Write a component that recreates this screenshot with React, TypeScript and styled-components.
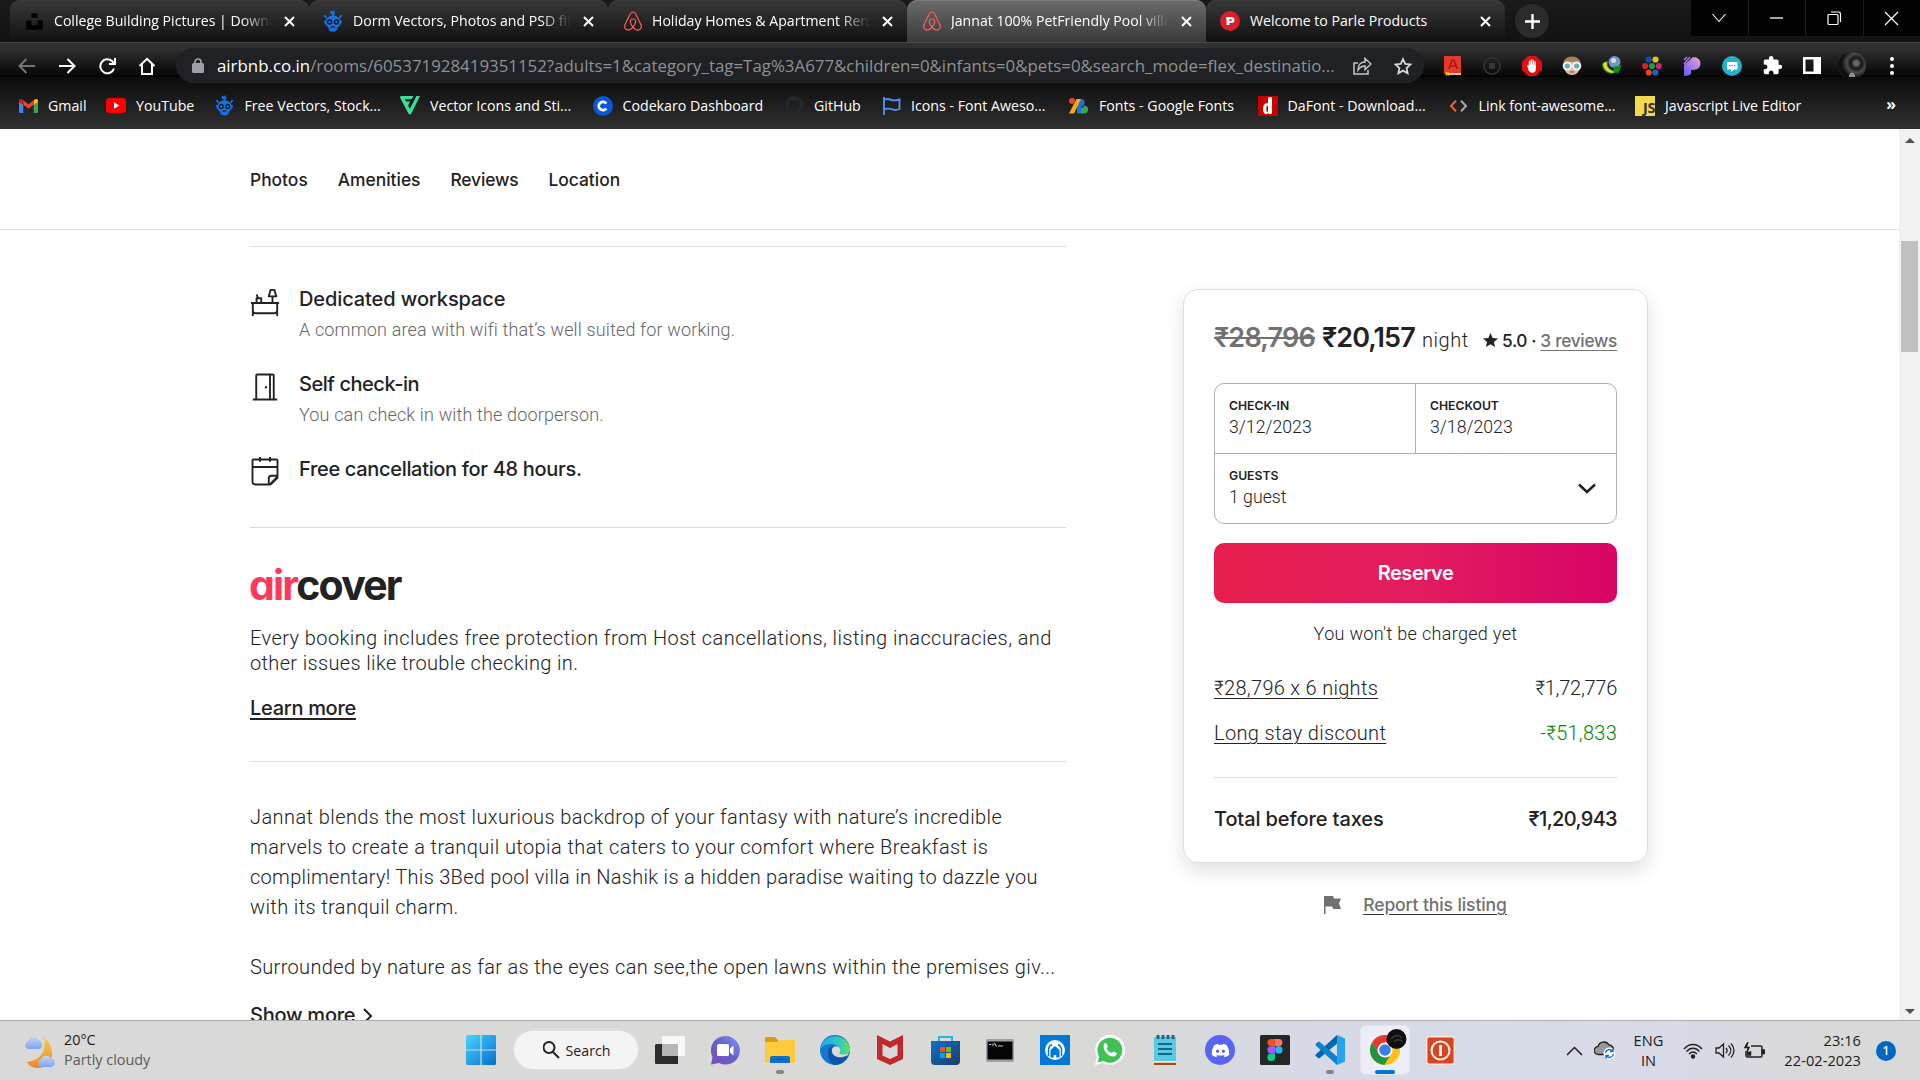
import React from 'react';
import styled, { createGlobalStyle } from 'styled-components';
import { FaAirbnb, FaDiscord, FaGithub, FaUnsplash } from 'react-icons/fa';
import { MdExtension } from 'react-icons/md';

const ui = '"Open Sans", "Noto Sans", sans-serif';
const medium = 'Inter, "Noto Sans", sans-serif';
const light = 'Roboto, "Noto Sans", sans-serif';

const GlobalStyle = createGlobalStyle`
  * { box-sizing: border-box; }
  body { margin: 0; background: #fff; overflow: hidden; }
  svg { display: block; flex: none; }
`;

const Screen = styled.div`
  width: 1920px;
  height: 1080px;
  display: flex;
  flex-direction: column;
  overflow: hidden;
  font-family: ${ui};
`;

/* ---------- browser frame ---------- */

const TabStrip = styled.div`
  height: 42px;
  flex: none;
  display: flex;
  background: linear-gradient(#1a1a1a, #121212);
  padding-left: 10px;
`;

const Tab = styled.div<{ $active?: boolean }>`
  width: 299px;
  height: 42px;
  padding: 0 14px;
  display: flex;
  align-items: center;
  gap: 10px;
  color: #fff;
  border-radius: 10px 10px ${p => (p.$active ? '0 0' : '8px 8px')};
  background: ${p => (p.$active ? 'linear-gradient(#6b6b6b, #393939)' : 'linear-gradient(#383838, #111)')};
  box-shadow: inset 0 1px 0 ${p => (p.$active ? '#7d7d7d' : '#3c3c3c')};
`;

const TabRule = styled.i<{ $hidden?: boolean }>`
  width: 1px;
  height: 26px;
  margin: 9px -1px 0 0;
  background: ${p => (p.$hidden ? 'transparent' : '#5c5c5c')};
`;

const TabTitle = styled.span<{ $fade?: boolean }>`
  flex: 1;
  overflow: hidden;
  white-space: nowrap;
  font-size: 14.1px;
  line-height: 24px;
  ${p => p.$fade && 'mask-image: linear-gradient(90deg, #000 86%, transparent 100%);'}
  margin-right: 2px;
`;

const NewTab = styled.div`
  width: 34px;
  height: 34px;
  margin: 4px 0 0 10px;
  border-radius: 50%;
  display: grid;
  place-items: center;
  background: #2b2b2b;
`;

const WindowButtons = styled.div`
  margin-left: auto;
  display: flex;
  gap: 1px;
  height: 36px;
  background: #1d1d1d;
`;

const WindowButton = styled.div`
  width: 56.5px;
  display: grid;
  place-items: center;
  background: #020202;
`;

const Toolbar = styled.div`
  height: 35px;
  flex: none;
  display: flex;
  align-items: flex-start;
  padding: 6px 0 0 7px;
  background: linear-gradient(#333 0, #303030 6px, #060606 34px, #000 34px);
  box-shadow: inset 0 1px 0 #484848;
`;

const NavSlot = styled.div`
  width: 40px;
  height: 35px;
  display: grid;
  place-items: center;
`;

const Omnibox = styled.div`
  position: relative;
  width: 1248px;
  height: 35px;
  margin-left: 9px;
  padding-left: 12px;
  border-radius: 18px;
  background: #202124;
  display: flex;
  align-items: center;
`;

const Url = styled.span`
  margin-left: 9px;
  width: 1125px;
  white-space: nowrap;
  color: #8d9195;
  font-size: 16.86px;
  line-height: 30px;
  b { font-weight: 400; color: #fff; }
`;

const OmniAction = styled.div`
  width: 39px;
  margin-left: 1px;
  display: grid;
  place-items: center;
`;

const Extensions = styled.div`
  display: flex;
  margin-left: 8px;
`;

const Bookmarks = styled.div`
  height: 52px;
  flex: none;
  padding: 5px 24px 0 18px;
  display: flex;
  align-items: center;
  color: #fff;
  background: linear-gradient(#0b0b0b, #303030);
`;

const Bookmark = styled.div<{ $w: number }>`
  width: ${p => p.$w}px;
  display: flex;
  align-items: center;
  gap: 10px;
  white-space: nowrap;
  font-size: 14.2px;
  line-height: 22px;
`;

const IconBox = styled.span`
  width: 20px;
  flex: none;
  display: grid;
  place-items: center;
`;

const More = styled.span`
  margin-left: auto;
  font-size: 16px;
  font-weight: 700;
  line-height: 16px;
  padding-bottom: 4px;
`;

const Avatar = styled.span`
  width: 28px;
  height: 28px;
  border-radius: 50%;
  background:
    radial-gradient(ellipse at 50% 100%, #8f8f8f 0 18%, transparent 20%),
    radial-gradient(circle at 65% 40%, #6a6a6a 0 8%, #151515 22%, #4a4a4a 38%, #0c0c0c 60%, #262626 100%);
`;

/* ---------- page ---------- */

const Viewport = styled.div`
  height: 891px;
  flex: none;
  display: flex;
  overflow: hidden;
`;

const Page = styled.div`
  width: 1899px;
  color: #222;
  overflow: hidden;
`;

const SectionNav = styled.nav`
  height: 101px;
  padding: 1px 0 0 250px;
  display: flex;
  align-items: center;
  gap: 30px;
  border-bottom: 1px solid #e2e2e2;
  font-family: ${medium};
  font-weight: 500;
  font-size: 17.4px;
`;

const NavLink = styled.a<{ $ls: number }>`
  letter-spacing: ${p => p.$ls}px;
`;

const Columns = styled.div`
  display: flex;
  align-items: flex-start;
  padding-left: 250px;
  gap: 117px;
`;

const Details = styled.main`
  width: 816px;
  padding-top: 16px;
`;

const Divider = styled.hr`
  border: 0;
  height: 1px;
  margin: 0;
  background: #dcdcdc;
`;

const Features = styled.div`
  padding: 40px 0 39px;
  display: flex;
  flex-direction: column;
  gap: 30px;
`;

const Feature = styled.div`
  display: flex;
  gap: 19px;
  > svg { margin-bottom: 1px; }
`;

const FeatureTitle = styled.div<{ $ls: number }>`
  font: 500 20px/25px ${medium};
  letter-spacing: ${p => p.$ls}px;
`;

const FeatureText = styled.div<{ $ls: number }>`
  margin-top: 5px;
  color: #666;
  font: 300 18px/25px ${light};
  letter-spacing: ${p => p.$ls}px;
`;

const AirCover = styled.section`
  height: 233px;
  padding-top: 32px;
`;

const AirCoverLogo = styled.div`
  height: 50px;
  margin-left: -1px;
  font: 700 41px/50px ${medium};
  font-feature-settings: "cv11";
  letter-spacing: -1.8px;
  span { color: #ff385c; }
`;

const Paragraph = styled.p<{ $lh: number; $top?: number }>`
  margin: ${p => p.$top ?? 0}px 0 0;
  font: 300 20px/${p => p.$lh}px ${light};
  white-space: nowrap;
`;

const Line = styled.span<{ $ls: number }>`
  display: block;
  letter-spacing: ${p => p.$ls}px;
`;

const LearnMore = styled.a`
  display: inline-block;
  margin-top: 20px;
  font: 500 20px/25px ${medium};
  letter-spacing: -0.3px;
  text-decoration: underline;
  text-decoration-thickness: 2px;
  text-underline-offset: 3px;
`;

const Description = styled.section`
  padding-top: 40px;
`;

const ShowMore = styled.div`
  margin-top: 21px;
  display: flex;
  align-items: center;
  gap: 8px;
  font: 500 20px/25px ${medium};
  letter-spacing: -0.25px;
`;

const Aside = styled.aside`
  width: 465px;
  margin-top: 59px;
`;

const Card = styled.div`
  height: 574px;
  padding: 30px;
  border: 1px solid #ddd;
  border-radius: 15px;
  box-shadow: 0 8px 20px rgba(0, 0, 0, 0.12);
`;

const PriceRow = styled.div`
  display: flex;
  align-items: baseline;
  height: 63px;
  font-family: ${medium};
  white-space: nowrap;
`;

const Price = styled.span<{ $old?: boolean }>`
  font-size: 27px;
  line-height: 36px;
  font-weight: 600;
  letter-spacing: ${p => (p.$old ? -0.8 : -0.9)}px;
  margin-right: ${p => (p.$old ? 7 : 7)}px;
  ${p => p.$old && 'color: #717171; text-decoration: line-through; text-decoration-thickness: 2px;'}
`;

const Night = styled.span`
  font: 300 20px/30px ${light};
  letter-spacing: 0.6px;
`;

const Rating = styled.span`
  margin-left: auto;
  display: flex;
  align-items: baseline;
  font-size: 17.3px;
  font-weight: 500;
  letter-spacing: -0.4px;
  svg { margin-right: 4px; }
`;

const Reviews = styled.a`
  color: #717171;
  text-decoration: underline;
  text-underline-offset: 3px;
  letter-spacing: -0.3px;
`;

const Booking = styled.div`
  display: grid;
  grid-template-columns: 200px 1fr;
  grid-template-rows: 69px 1fr;
  height: 141px;
  border: 1px solid #b0b0b0;
  border-radius: 10px;
`;

const Field = styled.div<{ $left?: boolean; $top?: boolean }>`
  padding: 13px 14px;
  ${p => p.$left && 'border-left: 1px solid #b0b0b0;'}
  ${p => p.$top && 'padding: 13px 20px 15px 14px; border-top: 1px solid #b0b0b0; grid-column: 1 / 3; display: flex; align-items: center; justify-content: space-between;'}
`;

const FieldLabel = styled.div`
  font: 600 12.2px/17px ${medium};
  text-transform: uppercase;
`;

const FieldValue = styled.div`
  margin-top: 1px;
  font: 300 17.7px/24px ${light};
`;

const ReserveButton = styled.button`
  display: block;
  width: 100%;
  height: 60px;
  margin: 19px 0 0;
  border: 0;
  border-radius: 10px;
  color: #fff;
  background: linear-gradient(90deg, #e61e4d 0%, #e31c5f 50%, #d70466 100%);
  font: 600 20px/25px ${medium};
  letter-spacing: -0.45px;
`;

const Notice = styled.div`
  margin-top: 18px;
  text-align: center;
  font: 300 18px/25px ${light};
  letter-spacing: 0.32px;
`;

const CostRow = styled.div<{ $total?: boolean; $green?: boolean }>`
  display: flex;
  justify-content: space-between;
  line-height: 25px;
  font-size: 20px;
  font-family: ${p => (p.$total ? medium : light)};
  font-weight: ${p => (p.$total ? 500 : 300)};
  margin-top: ${p => (p.$total ? 29 : p.$green ? 20 : 30)}px;
  margin-bottom: ${p => (p.$green ? 31 : 0)}px;
  span:last-child {
    letter-spacing: ${p => (p.$total ? -0.65 : p.$green ? 0.25 : -0.25)}px;
    ${p => p.$green && 'color: #008a05;'}
  }
`;

const CostLabel = styled.span<{ $ls: number; $plain?: boolean }>`
  letter-spacing: ${p => p.$ls}px;
  ${p => !p.$plain && 'text-decoration: underline; text-decoration-thickness: 1px; text-underline-offset: 3px;'}
`;

const Report = styled.div`
  margin-top: 29px;
  display: flex;
  align-items: center;
  justify-content: center;
  gap: 22px;
  color: #717171;
  font: 500 17.5px/25px ${medium};
  letter-spacing: -0.1px;
  a { text-decoration: underline; text-decoration-color: #333; text-underline-offset: 3px; }
`;

const Scrollbar = styled.div`
  width: 21px;
  background: #f1f1f1;
  display: flex;
  flex-direction: column;
  align-items: center;
  padding: 9px 0 6px;
  justify-content: space-between;
`;

const Thumb = styled.div`
  width: 17px;
  height: 111px;
  margin: 98px 0 auto;
  background: #c1c1c1;
`;

const Arrow = styled.i<{ $down?: boolean }>`
  border: 5px solid transparent;
  border-top-width: ${p => (p.$down ? 5 : 0)}px;
  border-bottom-width: ${p => (p.$down ? 0 : 5)}px;
  border-top-color: #505050;
  border-bottom-color: #505050;
`;

/* ---------- taskbar ---------- */

const Taskbar = styled.div`
  height: 60px;
  flex: none;
  display: flex;
  border-top: 1px solid #adadad;
  background: linear-gradient(90deg, #d9d9d9 0, #d9d9d8 1140px, #d7d9e5 1290px, #d5dbe7 1500px, #d9d9e7 1680px, #d9d9d9 1830px);
  color: #1c1c1c;
`;

const Weather = styled.div`
  width: 453.5px;
  padding: 8.5px 0 0 24px;
  display: flex;
  gap: 8px;
  font-size: 14.4px;
  line-height: 20px;
  > svg { margin-top: 5px; }
`;

const Muted = styled.div`
  color: #5b5b5b;
`;

const TaskSlot = styled.div<{ $active?: boolean }>`
  width: ${p => (p.$active ? 48 : 55)}px;
  height: ${p => (p.$active ? 48 : 58)}px;
  margin: ${p => (p.$active ? '5px 3.5px 0' : '0')};
  flex: none;
  display: grid;
  grid-template-rows: ${p => (p.$active ? 36 : 30)}px 4px;
  grid-template-columns: 100%;
  row-gap: 5px;
  padding-top: ${p => (p.$active ? 3 : 14)}px;
  justify-items: center;
  align-items: center;
  border-radius: 5px;
  ${p => p.$active && 'background: #ecedf6; box-shadow: 0 0 0 1px #e3e4ec;'}
`;

const Running = styled.i<{ $w: number }>`
  width: ${p => p.$w}px;
  height: 4px;
  border-radius: 2px;
  background: ${p => (p.$w > 10 ? '#0078d4' : '#858585')};
`;

const SearchPill = styled.div`
  width: 124px;
  height: 38px;
  margin: 10px 5px 0;
  padding-left: 2px;
  border-radius: 19px;
  background: #f4f4f4;
  box-shadow: 0 0 0 1px #e0e0e0;
  display: flex;
  align-items: center;
  justify-content: center;
  gap: 6px;
  font-size: 14.2px;
`;

const Tray = styled.div`
  margin-left: auto;
  padding-right: 24px;
  display: flex;
  align-items: center;
  font-size: 14.6px;
  line-height: 20px;
  letter-spacing: 0.05px;
`;

const TrayText = styled.div<{ $w: number; $right?: boolean }>`
  width: ${p => p.$w}px;
  padding-bottom: 2px;
  text-align: ${p => (p.$right ? 'right' : 'center')};
`;

const TrayIcon = styled.div<{ $w?: number }>`
  width: ${p => p.$w ?? 30}px;
  display: grid;
  place-items: center;
`;

const Badge = styled.span`
  width: 20px;
  height: 20px;
  margin-left: 15px;
  border-radius: 50%;
  background: #0067c0;
  color: #fff;
  font-size: 12px;
  font-weight: 600;
  text-align: center;
`;

/* ---------- drawings ---------- */

const CloseX = () => (
  <svg width="11" height="11" viewBox="0 0 11 11" stroke="#fff" strokeWidth="2"><path d="M1 1l9 9M10 1l-9 9" /></svg>
);

const Robot = ({ s = 20 }: { s?: number }) => (
  <svg width={s} height={s * 1.1} viewBox="0 0 20 22" fill="#1273eb">
    <path d="M7.500 0.500l1.700 1L11.500 0l-.3 2.200 1.300.8-1.500 1H8L6.800 2.800z" />
    <path d="M9 3h2.200v3H9z" />
    <path d="M.5 5.500L2.500 5l1.700 3-1.200.8zM19.500 5.500L17.500 5l-1.700 3 1.200.8z" />
    <ellipse cx="10" cy="12.300" rx="7.500" ry="6.800" />
    <path d="M1 10.500h2.500v4H1.800zM19 10.500h-2.500v4h1.700z" />
    <path d="M5 17.500c1.500 1.800 8.500 1.800 10 0-.5 2.800-2.500 4.200-5 4.200s-4.500-1.400-5-4.200z" />
    <circle cx="6.600" cy="12" r="2.700" fill="#161616" /><circle cx="13.400" cy="12" r="2.700" fill="#161616" />
    <circle cx="6.600" cy="12" r="1.300" /><circle cx="13.400" cy="12" r="1.300" />
    <path d="M8 16.800h4" stroke="#161616" strokeWidth="1.100" />
  </svg>
);

const Parle = () => (
  <svg width="20" height="20" viewBox="0 0 20 20">
    <circle cx="10" cy="10" r="10" fill="#da1f26" />
    <path d="M6 6h5.500a3 3 0 0 1 0 6H9.500v2H6.500V8H6zM9.500 8.200v1.800H11a.9.9 0 0 0 0-1.800z" fill="#fff" fillRule="evenodd" />
  </svg>
);

const Gmail = () => (
  <svg width="19" height="14" viewBox="0 0 19 14">
    <path d="M0 2v11a1 1 0 0 0 1 1h3.300V5.500z" fill="#4285f4" /><path d="M19 2v11a1 1 0 0 1-1 1h-3.300V5.500z" fill="#34a853" />
    <path d="M14.700 1.500V6L19 3V1.800C19 .1 17-.6 15.700.500z" fill="#fbbc04" /><path d="M0 1.800V3l4.300 3V1.500L3.300.500C2-.6 0 .1 0 1.800z" fill="#c5221f" />
    <path d="M4.300 1.300v4.500l5.200 3.900 5.200-3.900V1.300L9.500 5.200z" fill="#ea4335" />
  </svg>
);

const YouTube = () => (
  <svg width="20" height="15" viewBox="0 0 20 15"><rect width="20" height="15" rx="3.500" fill="#f00" /><path d="M8 4.300v6.400l5.400-3.200z" fill="#fff" /></svg>
);

const Flaticon = () => (
  <svg width="20" height="19" viewBox="0 0 20 19" fill="#3ddc97"><path d="M0 1.500C0 .5.600 0 1.500 0h12l-2 3.300H4.800L6 5.600h4.200L8.400 9H7.900l2 3.700L16.500 0H20L11.300 17.400c-.7 1.400-2.200 1.400-2.900 0z" /></svg>
);

const Codekaro = () => (
  <svg width="20" height="20" viewBox="0 0 20 20"><circle cx="10" cy="10" r="10" fill="#0b57d8" /><path d="M13.300 7.500a4.200 4.200 0 1 0 0 5" fill="none" stroke="#fff" strokeWidth="2.700" /></svg>
);

const FlagOutline = () => (
  <svg width="19" height="18" viewBox="0 0 19 18" fill="none" stroke="#4f8ff0" strokeWidth="1.900"><path d="M2 0v18M2 2.500c3-1 5-.5 7.500.500s4.500.5 8-.5v9.500c-3.500 1.500-6 1-8 .2S5 11.500 2 12.500" /></svg>
);

const GoogleFonts = () => (
  <svg width="20" height="16" viewBox="0 0 20 16">
    <path d="M8 1h5v14.500H8z" fill="#1a73e8" /><path d="M7.500 1H12L5 15.500H0z" fill="#fbab00" /><circle cx="3" cy="3" r="3" fill="#ea4335" />
    <path d="M12 1a3.500 3.500 0 0 1 0 7z" fill="#1a73e8" /><path d="M12 7.500h3a4 4 0 0 1 0 8h-3z" fill="#34a853" /><path d="M12 7.500h3.500A2.500 2.500 0 0 1 13 10h-1z" fill="#0d652d" />
  </svg>
);

const DaFont = () => (
  <svg width="20" height="20" viewBox="0 0 20 20"><path fill="#c80000" d="M0 0h20v20H0z" /><path d="M10 1.500l4-.5v17h-3.500v-1C7 19.500 5 17 5 13s2-6.500 5-5.500zm0 8.200c-1.500-.3-1.700 1-1.700 3.300s.4 3.200 1.700 2.700z" fill="#fff" fillRule="evenodd" /></svg>
);

const Angles = () => (
  <svg width="19" height="12" viewBox="0 0 19 12" fill="none" strokeWidth="2"><path d="M7 .8L2 6l5 5.200" stroke="#e8663c" /><path d="M12 .8L17 6l-5 5.200" stroke="#a9a9a9" /></svg>
);

const JsMark = styled.span`
  width: 20px;
  height: 20px;
  background: #f0db4f;
  color: #323330;
  font: 700 14.5px/24px ${ui};
  letter-spacing: -0.4px;
  text-align: right;
`;

const Book = () => (
  <svg width="17" height="20" viewBox="0 0 17 20"><rect width="17" height="18" rx="1" fill="#e8372c" /><path d="M1 17h16v2H3a2 2 0 0 1-2-2z" fill="#d7c7a4" /><path d="M4.800 13L8.300 4h1.600l3.400 9M6 10h6" fill="none" stroke="#a3170f" strokeWidth="1.500" /><path d="M2 16h3v4l-1.500-1L2 20z" fill="#f4b400" /></svg>
);
const StopDot = () => (
  <svg width="18" height="18" viewBox="0 0 18 18"><circle cx="9" cy="9" r="8" fill="none" stroke="#353535" strokeWidth="1.500" /><rect x="6" y="6" width="6" height="6" fill="#353535" /></svg>
);
const AdBlock = () => (
  <svg width="20" height="20" viewBox="0 0 20 20"><path d="M6 0h8l6 6v8l-6 6H6l-6-6V6z" fill="#e40d0d" /><path d="M5.300 10c-.2-1.200 1-1.500 1.500-.6V5.200c0-1.100 1.500-1.100 1.500 0v3.300h.4V4c0-1.200 1.500-1.200 1.500 0v4.500h.4V4.500c0-1.100 1.500-1.100 1.500 0v4.200h.4V6c0-1.100 1.500-1.100 1.500 0v7c0 2.200-1.400 3.700-3.700 3.700s-3.500-1.200-4-3.200z" fill="#fff" /></svg>
);
const Face = () => (
  <svg width="20" height="20" viewBox="0 0 20 20"><circle cx="10" cy="11" r="8" fill="#dcb8a2" /><path d="M1 9.500C1 3.500 5 .5 10 .5s9 3 9 9l-3-3.500H4z" fill="#a88156" /><circle cx="5.300" cy="10" r="3.600" fill="#6fa9b5" stroke="#eef6f8" strokeWidth="2" /><circle cx="14.700" cy="10" r="3.600" fill="#6fa9b5" stroke="#eef6f8" strokeWidth="2" /><path d="M8 16h4" stroke="#a33" /></svg>
);
const Idm = () => (
  <svg width="20" height="20" viewBox="0 0 20 20"><circle cx="12.500" cy="6" r="6" fill="#6e95c4" /><circle cx="11.500" cy="4.500" r="2.500" fill="#d5e0ef" /><path d="M0 8c1.500-2 4-3 7-3C4.500 8 6 13 12 14.500l-1-3.500 9-2-4 9-1.500-1.500C7 20 0 15 0 8z" fill="#128a22" /><path d="M1 8c1-1.300 2.500-2 4-2.200-1.500 4 2 8.700 7 9.700l-1 1.500C5.500 17 1.500 13 1 8z" fill="#e6db2b" /></svg>
);
const Dots = () => (
  <svg width="20" height="20" viewBox="0 0 20 20"><circle cx="6.800" cy="3.500" r="3.100" fill="#1748c4" /><circle cx="13.500" cy="3.500" r="3.100" fill="#e7c310" /><circle cx="3.200" cy="10" r="3.100" fill="#d3202b" /><circle cx="10" cy="10" r="3.100" fill="#13a04c" /><circle cx="16.800" cy="10" r="3.100" fill="#c82670" /><circle cx="6.800" cy="16.500" r="3.100" fill="#e5431b" /><circle cx="13.500" cy="16.500" r="3.100" fill="#1c5fd0" /></svg>
);
const Pesticide = () => (
  <svg width="18" height="20" viewBox="0 0 18 20"><defs><linearGradient id="pl" x1="0" y1="1" x2="1" y2="0"><stop stopColor="#5d5bff" /><stop offset="1" stopColor="#f3a0d4" /></linearGradient></defs><path d="M1 20V9l9-8c5 0 7.500 3 7.500 6.500S15 14 10 14H8v3c0 2-3 3-7 3z" fill="url(#pl)" /><path d="M1 4l3-3M1 8l6-7" stroke="#9b7cf2" strokeWidth="1.500" /></svg>
);
const Chat = () => (
  <svg width="20" height="20" viewBox="0 0 20 20"><circle cx="10" cy="10" r="10" fill="#23b0c9" /><path d="M5 6h10.500v7.500H12l-3 2.500v-2.500H5z" fill="#fff" /><path d="M7 9.700h7" stroke="#23b0c9" strokeDasharray="1.500 1" strokeWidth="1.300" /></svg>
);
const SidePanel = () => (
  <svg width="18" height="17" viewBox="0 0 18 17"><path d="M0 0h18v17H0zM2.500 2.500v12h8v-12z" fill="#fff" fillRule="evenodd" /></svg>
);
const Menu = () => (
  <svg width="4" height="18" viewBox="0 0 4 18" fill="#fff"><circle cx="2" cy="2" r="2" /><circle cx="2" cy="9" r="2" /><circle cx="2" cy="16" r="2" /></svg>
);

const Stroke = ({ d, w = 18, h = 18, c = '#fff', sw = 2 }: { d: string; w?: number; h?: number; c?: string; sw?: number }) => (
  <svg width={w} height={h} viewBox={`0 0 ${w} ${h}`} fill="none" stroke={c} strokeWidth={sw}><path d={d} /></svg>
);

const Desk = () => (
  <svg width="30" height="30" viewBox="0 0 32 32" fill="#222"><path d="M26 2a1 1 0 0 1 .922.612l.04.113 2 7a1 1 0 0 1-.847 1.269L28 11h-3v5h6v2h-1v13h-2v-2.536a3.976 3.976 0 0 1-1.730.527L26 29H6a3.981 3.981 0 0 1-2-.535V31H2V18H1v-2h5v-4a1 1 0 0 1 .883-.993L7 11h.238L6.086 8.406l1.828-.812L9.427 11H12a1 1 0 0 1 .993.883L13 12v4h10v-5h-3a1 1 0 0 1-.987-1.162l.025-.113 2-7a1 1 0 0 1 .842-.718L22 2h4zm2 16H4v7a2 2 0 0 0 1.697 1.977l.154.018L6 27h20a2 2 0 0 0 1.995-1.850L28 25v-7zm-17-5H8v3h3v-3zm14.245-9h-2.491l-1.429 5h5.349l-1.429-5z" /></svg>
);
const Door = () => (
  <svg width="30" height="30" viewBox="0 0 32 32" fill="#222"><path d="M24.333 1.667a2 2 0 0 1 1.995 1.850l.005.150v24.666H29v2H3v-2h2.667V3.667a2 2 0 0 1 1.850-1.995l.150-.005h16.666zm-4 2H7.667v24.666h12.666V3.667zm4 0h-2v24.666h2V3.667zM17 15a1.300 1.300 0 1 1 0 2.600 1.300 1.300 0 0 1 0-2.600z" /></svg>
);
const Calendar = () => (
  <svg width="30" height="30" viewBox="0 0 32 32" fill="#222"><path d="M11.667 0v1.667h8.666V0h2v1.667h6a2 2 0 0 1 1.995 1.850l.005.150v17.916c0 .688-.280 1.351-.752 1.845l-.140.134-6.325 5.970-.067.067a3.003 3.003 0 0 1-1.818.729L21 30.333H5.667a4 4 0 0 1-3.995-3.800l-.005-.200V3.667a2 2 0 0 1 1.850-1.995l.150-.005h6V0h2zm16.666 11.667H3.667v14.666a2 2 0 0 0 1.850 1.995l.150.005H19V23a4 4 0 0 1 3.800-3.995L23 19h5.333v-7.333zM27.819 21H23a2 2 0 0 0-1.995 1.850L21 23v5.030L27.819 21zM28.333 3.667h-6V5h-2V3.667h-8.666V5h-2V3.667h-6v6h24.666v-6z" /></svg>
);

const WeatherIcon = () => (
  <svg width="32" height="34" viewBox="0 0 32 34"><defs><linearGradient id="mn" x1="0" y1="0" x2="0" y2="1"><stop stopColor="#f6c74a" /><stop offset="1" stopColor="#f08a24" /></linearGradient><linearGradient id="cl" x1="0" y1="0" x2="0" y2="1"><stop stopColor="#c3d6fa" /><stop offset="1" stopColor="#7fa4ea" /></linearGradient></defs>
    <path d="M20 3c12 8 11 30-6 30-5 0-9-2-11-6 13-2 20-10 17-24z" fill="url(#mn)" /><path d="M4 14a4 4 0 0 1 0-7.600A5.500 5.500 0 0 1 14.500 5a4.600 4.600 0 0 1 0 9z" fill="url(#cl)" /><path d="M17 32a4 4 0 0 1 0-7.600A5.500 5.500 0 0 1 27 23.500a4.300 4.300 0 0 1 0 8.500z" fill="url(#cl)" /></svg>
);
const Windows = () => (
  <svg width="30" height="30" viewBox="0 0 30 30"><defs><linearGradient id="wn" x1="0" y1="0" x2="1" y2="1"><stop stopColor="#4fd2ff" /><stop offset="1" stopColor="#0070d1" /></linearGradient></defs><path d="M1 0h13.400v14.400H0V1zM15.600 0H29l1 1v13.400H15.600zM0 15.600h14.400V30H1l-1-1zM15.600 15.600H30V29l-1 1H15.600z" fill="url(#wn)" /></svg>
);
const TaskView = () => (
  <svg width="30" height="28" viewBox="0 0 30 28"><path d="M1 8h22v20H1a1 1 0 0 1-1-1V9z" fill="#2d2d2d" /><rect x="7" width="23" height="20" rx="1" fill="#fff" opacity=".8" /><path d="M7 8h16v12H7z" fill="#aaa" opacity=".7" /></svg>
);
const Teams = () => (
  <svg width="29" height="29" viewBox="0 0 29 29"><defs><linearGradient id="tm" x1="0" y1="1" x2="1" y2="0"><stop stopColor="#7b50b8" /><stop offset=".5" stopColor="#6560cc" /><stop offset="1" stopColor="#7f95ee" /></linearGradient></defs><path d="M14.500 0a14.300 14.300 0 1 1-6.500 27L0 28.500 1.500 21A14.400 14.400 0 0 1 14.500 0z" fill="url(#tm)" /><rect x="6" y="8" width="12" height="12" rx="1.500" fill="#fff" /><path d="M19 12.500l3.500-3v10l-3.500-3z" fill="#fff" /></svg>
);
const Explorer = () => (
  <svg width="30" height="27" viewBox="0 0 30 27"><path d="M1 0h9l3 3v4H0V1z" fill="#dd9a09" /><path d="M0 5h13l2-2h14l1 1v21l-1 1H0z" fill="#fdcb3c" /><path d="M7 19h16a2 2 0 0 1 2 2v5H5v-5a2 2 0 0 1 2-2z" fill="#0e70c8" /><path d="M8 22.500h14" stroke="#0b4f9a" /></svg>
);
const Edge = () => (
  <svg width="30" height="30" viewBox="0 0 30 30"><defs><linearGradient id="eg"><stop stopColor="#27a8e6" /><stop offset=".6" stopColor="#2fc6c9" /><stop offset="1" stopColor="#66e24c" /></linearGradient></defs><circle cx="15" cy="15" r="15" fill="#1277cf" /><path d="M.5 13A15 15 0 0 1 30 14c0 5-5 7-9 6-3-1-1-2-1-5 0-4-5-6-9-6-6 0-10 3-10.500 6z" fill="url(#eg)" /><path d="M8 17c0-4 3-6 6-6-4 5-1 12 6 12 4 0 6-2 8-2-2 5-7 9-13 9-4 0-7-6-7-13z" fill="#0c56a8" /><path d="M12 14c-1 5 3 9 10 8 3-.5 5-1 7-3-1-1-6 2-9 0-1.500-1 1-2 0-5s-6-4-8 0z" fill="#d9d9d9" /></svg>
);
const McAfee = () => (
  <svg width="28" height="30" viewBox="0 0 28 30"><path d="M1 0l13 6.500L27 0v24L14 30 1 24zM6.500 9v11.500L14 24l7.500-3.500V9L14 13z" fill="#c02a2a" fillRule="evenodd" /></svg>
);
const Store = () => (
  <svg width="29" height="29" viewBox="0 0 29 29"><defs><linearGradient id="st" x1="0" y1="0" x2="1" y2="1"><stop stopColor="#0b74cc" /><stop offset="1" stopColor="#203a67" /></linearGradient></defs><path d="M8 8V1h13v7" fill="none" stroke="#22b6ee" strokeWidth="2" /><path d="M0 5h29v20a4 4 0 0 1-4 4H4a4 4 0 0 1-4-4z" fill="url(#st)" /><path fill="#f25022" d="M9 11h5v5H9z" /><path fill="#7fba00" d="M15 11h5v5h-5z" /><path fill="#00a4ef" d="M9 17h5v5H9z" /><path fill="#ffb900" d="M15 17h5v5h-5z" /></svg>
);
const Terminal = () => (
  <svg width="28" height="23" viewBox="0 0 28 23"><rect width="28" height="23" rx="1" fill="#9da1a8" /><path fill="#050505" d="M1.500 2.500h25v18h-25z" /><path d="M3 5.500h2.500M7 4.500v2.500M8.500 4l2 3.500M12 7h5" stroke="#ccc" strokeWidth="1.100" /></svg>
);
const BlueApp = () => (
  <svg width="30" height="30" viewBox="0 0 30 30"><path fill="#0078d7" d="M0 0h30v30H0z" /><circle cx="15" cy="15" r="10" fill="#fff" /><path d="M8.500 21v-6.500A6.500 6.500 0 0 1 12 9.300M21.500 21v-6.500A6.500 6.500 0 0 0 18 9.300" fill="none" stroke="#0078d7" strokeWidth="1.500" /><path d="M10.500 22.500V15L15 11l4.500 4v7.500h-3.300V20h-2.400v2.500z" fill="#0078d7" /></svg>
);
const Notepad = () => (
  <svg width="22" height="30" viewBox="0 0 22 30"><path fill="#5cc9e4" d="M0 2h22v25H0z" /><path fill="#a0500f" d="M0 27.500h22V30H0z" /><path fill="#fff" d="M0 26h22v1.500H0z" /><path d="M2.500 2h18" stroke="#146a86" strokeWidth="4" strokeDasharray="3 2" /><path d="M4 9h14M4 14h14M4 19h14" stroke="#0f6a86" strokeWidth="1.800" /></svg>
);
const WhatsAppIcon = () => (
  <svg width="30" height="30" viewBox="0 0 30 30"><path d="M0 30l2-8A15 15 0 1 1 8 28z" fill="#fff" /><path d="M2.700 27.300l1.500-5.600A12.500 12.500 0 1 1 8.600 26z" fill="#3ec254" /><path d="M9 9c1-1.500 2-1.500 2.700 0l1 2.300c.2.700-1 1.500-1 2.200 1 2 2.800 3.600 5 4.400.7 0 1.200-1.500 2-1.400l3 1.500c.5 1-1 3.500-3.200 3.500C13 21.500 7 15 9 9z" fill="#fff" /></svg>
);
const DiscordDisc = styled.span`
  width: 30px;
  height: 30px;
  display: grid;
  place-items: center;
  border-radius: 50%;
  background: #5865f2;
  color: #fff;
  font-size: 19px;
`;
const Figma = () => (
  <svg width="30" height="30" viewBox="0 0 30 30"><rect width="30" height="30" rx="1.500" fill="#262626" /><path d="M15 4h-4a3.600 3.600 0 0 0 0 7.200h4z" fill="#f24e1e" /><path d="M15 4h3.800a3.600 3.600 0 0 1 0 7.200H15z" fill="#ff7262" /><path d="M15 11.200h-4a3.600 3.600 0 0 0 0 7.300h4z" fill="#a259ff" /><circle cx="18.800" cy="14.900" r="3.700" fill="#1abcfe" /><path d="M11 18.500h4v3.700a3.800 3.800 0 1 1-4-3.700z" fill="#0acf83" /></svg>
);
const VsCode = () => (
  <svg width="30" height="30" viewBox="0 0 30 30"><path d="M22 0l8 3.500v23L22 30z" fill="#24a3ee" /><path d="M22 0L1 19.300c-.8.600-.7 1.400 0 2L3 23c.6.500 1.200.4 1.800 0L22 8.500z" fill="#0067b0" /><path d="M22 30L1 10.700c-.8-.6-.7-1.400 0-2L3 7c.6-.5 1.200-.4 1.800 0L22 21.500z" fill="#0f80cc" /></svg>
);
const Chrome = () => (
  <svg width="44" height="36" viewBox="-6 0 44 36"><circle cx="16" cy="21" r="15" fill="#fbc116" /><path d="M16 6A15 15 0 0 0 3 13.500L9.500 25 16 21V13.500h13A15 15 0 0 0 16 6z" fill="#e33b2e" /><path d="M3 13.500A15 15 0 0 0 15.500 36l6.500-11.500-6-1-6.500 1z" fill="#229342" /><circle cx="16" cy="21" r="7.500" fill="#fff" /><circle cx="16" cy="21" r="5.800" fill="#3b7ded" /><circle cx="27.500" cy="10" r="10" fill="#0e0e0e" /><path d="M22 10c3-4 8-5 11-1M25 13c2-3 6-2 8-1" stroke="#3a3a3a" strokeWidth="1.500" fill="none" /></svg>
);
const PowerApp = () => (
  <svg width="29" height="29" viewBox="0 0 29 29"><rect x=".7" y=".7" width="27.600" height="27.600" rx="2.500" fill="#dc4420" stroke="#fbeae6" strokeWidth="1.400" /><circle cx="14.500" cy="14.500" r="9" fill="none" stroke="#fff" strokeWidth="2" /><path d="M14.500 9v11" stroke="#fff" strokeWidth="2.800" /></svg>
);
const CloudSync = () => (
  <svg width="22" height="19" viewBox="0 0 22 19"><path d="M4.500 13.500a4 4 0 0 1-.5-8A6 6 0 0 1 15 4a4.600 4.600 0 0 1 4.500 5v4.500z" fill="#999" stroke="#222" strokeWidth="1.300" /><circle cx="15.500" cy="12.500" r="6" fill="#fff" /><path d="M11.500 12a4 4 0 0 1 7-2M19.500 13a4 4 0 0 1-7 2M19 7.500V10.500h-3M12 17.500v-3h3" stroke="#1673cc" strokeWidth="1.400" fill="none" /></svg>
);

/* ---------- data ---------- */

const tabs = [
  { icon: <FaUnsplash size={19} color="#000" />, title: 'College Building Pictures | Download', fade: true },
  { icon: <Robot />, title: 'Dorm Vectors, Photos and PSD files', fade: true },
  { icon: <FaAirbnb size={22} color="#ff5a5f" />, title: 'Holiday Homes & Apartment Rentals', fade: true },
  { icon: <FaAirbnb size={22} color="#ff5a5f" />, title: 'Jannat 100% PetFriendly Pool villa', fade: true, active: true },
  { icon: <Parle />, title: 'Welcome to Parle Products' },
];

const bookmarks = [
  { icon: <Gmail />, label: 'Gmail', w: 88 },
  { icon: <YouTube />, label: 'YouTube', w: 108.5 },
  { icon: <Robot s={19} />, label: 'Free Vectors, Stock...', w: 185.5 },
  { icon: <Flaticon />, label: 'Vector Icons and Sti...', w: 192.5 },
  { icon: <Codekaro />, label: 'Codekaro Dashboard', w: 191.5 },
  { icon: <FaGithub size={19} color="#24292e" />, label: 'GitHub', w: 97 },
  { icon: <FlagOutline />, label: 'Icons - Font Aweso...', w: 188 },
  { icon: <GoogleFonts />, label: 'Fonts - Google Fonts', w: 188.5 },
  { icon: <DaFont />, label: 'DaFont - Download...', w: 191 },
  { icon: <Angles />, label: 'Link font-awesome...', w: 186.5 },
  { icon: <JsMark>JS</JsMark>, label: 'Javascript Live Editor', w: 180 },
];

const extensions = [
  <Book />, <StopDot />, <AdBlock />, <Face />, <Idm />, <Dots />, <Pesticide />, <Chat />,
  <MdExtension size={21} color="#fff" />, <SidePanel />, <Avatar />, <Menu />,
];

const tasks = [
  { icon: <TaskView /> }, { icon: <Teams /> }, { icon: <Explorer />, run: 8 }, { icon: <Edge /> }, { icon: <McAfee /> },
  { icon: <Store /> }, { icon: <Terminal /> }, { icon: <BlueApp /> }, { icon: <WhatsAppIcon /> }, { icon: <Notepad /> },
  { icon: <DiscordDisc><FaDiscord /></DiscordDisc> }, { icon: <Figma /> }, { icon: <VsCode />, run: 8 },
  { icon: <Chrome />, run: 20, active: true }, { icon: <PowerApp /> },
];

const windowIcons = [
  <Stroke d="M1.500 3l6.500 7.500L14.500 3" w={16} h={14} sw={1.1} />,
  <Stroke d="M1 7h13" w={15} h={14} sw={1.3} />,
  <Stroke d="M1 4.500a1 1 0 0 1 1-1h8a1 1 0 0 1 1 1v8a1 1 0 0 1-1 1H2a1 1 0 0 1-1-1zM4 1h7.500a2 2 0 0 1 2 2v8" w={15} h={15} sw={1.2} />,
  <Stroke d="M1 1l13 13M14 1L1 14" w={15} h={15} sw={1.2} />,
];

/* ---------- sections ---------- */

const BrowserFrame = () => (
  <>
    <TabStrip>
      {tabs.map((t, i) => (
        <React.Fragment key={t.title}>
          <Tab $active={t.active}>
            <IconBox>{t.icon}</IconBox>
            <TabTitle $fade={t.fade}>{t.title}</TabTitle>
            <CloseX />
          </Tab>
          <TabRule $hidden={i > 1} />
        </React.Fragment>
      ))}
      <NewTab><Stroke d="M7.500 0v15M0 7.500h15" w={15} h={15} sw={2.400} /></NewTab>
      <WindowButtons>{windowIcons.map((x, i) => <WindowButton key={i}>{x}</WindowButton>)}</WindowButtons>
    </TabStrip>
    <Toolbar>
      <NavSlot><Stroke d="M17 8H2M8.500 1L1.500 8l7 7" w={18} h={16} c="#757575" /></NavSlot>
      <NavSlot><Stroke d="M1 8h15M9.500 1l7 7-7 7" w={18} h={16} /></NavSlot>
      <NavSlot><Stroke d="M16 11.500A7 7 0 1 1 14 4l2.500 2.500M17 1v6h-6" /></NavSlot>
      <NavSlot><Stroke d="M1.500 9L9 1.800 16.500 9M4 7v10h10V7" /></NavSlot>
      <Omnibox>
        <IconBox>
          <svg width="12" height="15" viewBox="0 0 12 15"><rect y="5" width="12" height="10" rx="1.500" fill="#9aa0a6" /><path d="M3 6V4a3 3 0 0 1 6 0v2" fill="none" stroke="#9aa0a6" strokeWidth="1.700" /></svg>
        </IconBox>
        <Url><b>airbnb.co.in</b>/rooms/605371928419351152?adults=1&amp;category_tag=Tag%3A677&amp;children=0&amp;infants=0&amp;pets=0&amp;search_mode=flex_destinatio...</Url>
        <OmniAction><Stroke d="M5 6H1v11h14v-4M5 13c0-5 3-8 7-8V1.500L18 7l-6 5.500V9c-3 0-5 1-7 4z" w={19} h={18} c="#c4c7ca" sw={1.500} /></OmniAction>
        <OmniAction><Stroke d="M9 2l2.200 4.800 5.300.600-3.900 3.600 1 5.200L9 13.600l-4.600 2.600 1-5.200L1.500 7.400l5.300-.6z" c="#d5d7d9" sw={1.800} /></OmniAction>
      </Omnibox>
      <Extensions>{extensions.map((x, i) => <NavSlot key={i}>{x}</NavSlot>)}</Extensions>
    </Toolbar>
    <Bookmarks>
      {bookmarks.map(b => <Bookmark key={b.label} $w={b.w}><IconBox>{b.icon}</IconBox>{b.label}</Bookmark>)}
      <More>»</More>
    </Bookmarks>
  </>
);

const ListingDetails = () => (
  <Details>
    <Divider />
    <Features>
      <Feature>
        <Desk />
        <div>
          <FeatureTitle $ls={-0.1}>Dedicated workspace</FeatureTitle>
          <FeatureText $ls={0.15}>A common area with wifi that’s well suited for working.</FeatureText>
        </div>
      </Feature>
      <Feature>
        <Door />
        <div>
          <FeatureTitle $ls={-0.45}>Self check-in</FeatureTitle>
          <FeatureText $ls={0.15}>You can check in with the doorperson.</FeatureText>
        </div>
      </Feature>
      <Feature>
        <Calendar />
        <FeatureTitle $ls={-0.32}>Free cancellation for 48 hours.</FeatureTitle>
      </Feature>
    </Features>
    <Divider />
    <AirCover>
      <AirCoverLogo><span>air</span>cover</AirCoverLogo>
      <Paragraph $lh={25} $top={16}>
        <Line $ls={0.42}>Every booking includes free protection from Host cancellations, listing inaccuracies, and</Line>
        <Line $ls={0.35}>other issues like trouble checking in.</Line>
      </Paragraph>
      <LearnMore>Learn more</LearnMore>
    </AirCover>
    <Divider />
    <Description>
      <Paragraph $lh={30}>
        <Line $ls={0.42}>Jannat blends the most luxurious backdrop of your fantasy with nature’s incredible</Line>
        <Line $ls={0.42}>marvels to create a tranquil utopia that caters to your comfort where Breakfast is</Line>
        <Line $ls={0.29}>complimentary! This 3Bed pool villa in Nashik is a hidden paradise waiting to dazzle you</Line>
        <Line $ls={0.38}>with its tranquil charm.</Line>
        <br />
        <Line $ls={0.35}>Surrounded by nature as far as the eyes can see,the open lawns within the premises giv...</Line>
      </Paragraph>
      <ShowMore>Show more <Stroke d="M1 1l7 7-7 7" w={10} h={16} c="#222" /></ShowMore>
    </Description>
  </Details>
);

const ReservePanel = () => (
  <Aside>
    <Card>
      <PriceRow>
        <Price $old>₹28,796</Price>
        <Price>₹20,157</Price>
        <Night>night</Night>
        <Rating>
          <svg width="15" height="14" viewBox="0 0 15 14"><path d="M7.500 0l2.100 4.900 5.400.500-4.100 3.500 1.200 5.100-4.600-2.700L2.900 14l1.200-5.100L0 5.400l5.400-.5z" fill="#222" /></svg>
          5.0&nbsp;·&nbsp;<Reviews>3 reviews</Reviews>
        </Rating>
      </PriceRow>
      <Booking>
        <Field><FieldLabel>Check-in</FieldLabel><FieldValue>3/12/2023</FieldValue></Field>
        <Field $left><FieldLabel>Checkout</FieldLabel><FieldValue>3/18/2023</FieldValue></Field>
        <Field $top>
          <div><FieldLabel>Guests</FieldLabel><FieldValue>1 guest</FieldValue></div>
          <Stroke d="M1 1.500l8 7.500 8-7.500" w={18} h={11} c="#222" sw={2.500} />
        </Field>
      </Booking>
      <ReserveButton>Reserve</ReserveButton>
      <Notice>You won't be charged yet</Notice>
      <CostRow><CostLabel $ls={0.3}>₹28,796 x 6 nights</CostLabel><span>₹1,72,776</span></CostRow>
      <CostRow $green><CostLabel $ls={0.35}>Long stay discount</CostLabel><span>-₹51,833</span></CostRow>
      <Divider />
      <CostRow $total><CostLabel $plain $ls={-0.1}>Total before taxes</CostLabel><span>₹1,20,943</span></CostRow>
    </Card>
    <Report>
      <svg width="17" height="18" viewBox="0 0 17 18" fill="#717171"><path d="M0 0h9l1 2.500h7L15 7.500l2 5.500H9l-1-2.500H1.500V18H0z" /></svg>
      <a>Report this listing</a>
    </Report>
  </Aside>
);

const DesktopTaskbar = () => (
  <Taskbar>
    <Weather><WeatherIcon /><div>20°C<Muted>Partly cloudy</Muted></div></Weather>
    <TaskSlot><Windows /></TaskSlot>
    <SearchPill><Stroke d="M11.500 6.500a5.500 5.500 0 1 1-11 0 5.500 5.500 0 0 1 11 0zM10 11l6 6" w={17} h={18} c="#222" />Search</SearchPill>
    {tasks.map((t, i) => <TaskSlot key={i} $active={t.active}>{t.icon}{t.run && <Running $w={t.run} />}</TaskSlot>)}
    <Tray>
      <TrayIcon><Stroke d="M1 9l7.500-7.500L16 9" w={17} h={10} c="#222" sw={1.500} /></TrayIcon>
      <TrayIcon $w={32}><CloudSync /></TrayIcon>
      <TrayText $w={55}>ENG<br />IN</TrayText>
      <TrayIcon $w={34}><svg width="20" height="16" viewBox="0 0 20 16" fill="none" stroke="#222" strokeWidth="1.400"><path d="M1 6c5-6 13-6 18 0M3.500 8.500c4-4.300 9-4.300 13 0M6 11c2.500-2.500 5.500-2.500 8 0" /><circle cx="10" cy="13.500" r="1.500" fill="#222" /></svg></TrayIcon>
      <TrayIcon $w={29}><svg width="20" height="17" viewBox="0 0 20 17" fill="none" stroke="#222" strokeWidth="1.300"><path d="M1 6v5h3l4.500 4V2L4 6zM11 6c1.300 1.500 1.300 3.500 0 5M13.500 3.500c3 3 3 7 0 10M16 1.500c4 4 4 10 0 14" /></svg></TrayIcon>
      <TrayIcon><svg width="21" height="17" viewBox="0 0 21 17" fill="none" stroke="#222" strokeWidth="1.500"><path d="M7 4h9.500a1.500 1.500 0 0 1 1.500 1.500v8a1.500 1.500 0 0 1-1.500 1.500h-13A1.500 1.500 0 0 1 2 13.500V9" /><path d="M18 8h2.500v3.500H18zM4 0L1 5.500h4L3 10M3.500 11l3-1v3h-3z" fill="#222" /></svg></TrayIcon>
      <TrayText $w={92} $right>23:16<br />22-02-2023</TrayText>
      <Badge>1</Badge>
    </Tray>
  </Taskbar>
);

export default function App() {
  return (
    <Screen>
      <GlobalStyle />
      <BrowserFrame />
      <Viewport>
        <Page>
          <SectionNav>
            <NavLink $ls={0}>Photos</NavLink>
            <NavLink $ls={0}>Amenities</NavLink>
            <NavLink $ls={-0.15}>Reviews</NavLink>
            <NavLink $ls={0}>Location</NavLink>
          </SectionNav>
          <Columns>
            <ListingDetails />
            <ReservePanel />
          </Columns>
        </Page>
        <Scrollbar><Arrow /><Thumb /><Arrow $down /></Scrollbar>
      </Viewport>
      <DesktopTaskbar />
    </Screen>
  );
}
